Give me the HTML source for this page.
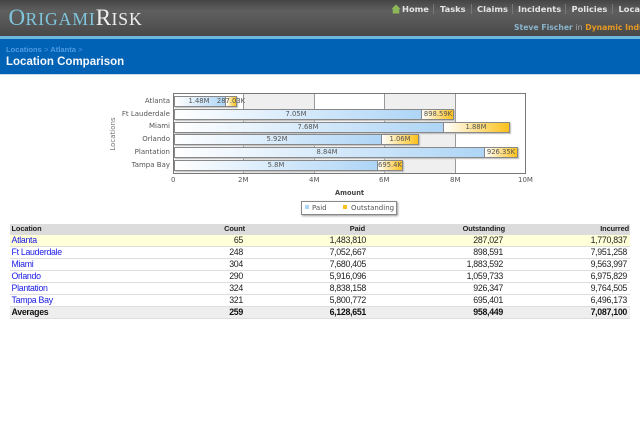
<!DOCTYPE html>
<html><head><meta charset="utf-8"><style>
*{box-sizing:border-box}
html,body{margin:0;padding:0;width:640px;height:430px;overflow:hidden;background:#fff}
body{position:relative;font-family:"Liberation Sans",sans-serif;filter:blur(.3px)}
.a{position:absolute;white-space:nowrap}
#hd{left:0;top:0;width:640px;height:36px;background:linear-gradient(#444 0,#5e5e5e 30%,#555 65%,#474747 100%)}
#ln{left:0;top:36px;width:640px;height:3px;background:#6db8dc}
#bl{left:0;top:39px;width:640px;height:35px;background:#0062b5}
#un{left:0;top:74px;width:640px;height:1px;background:#c5d8e6}
.nav{top:4px;font:bold 8.3px/11px "DejaVu Sans",sans-serif;color:#e4e4e4}
.sep{top:4px;width:1px;height:10px;background:#777}
.c{font:7px/8px "DejaVu Sans",sans-serif;color:#555}
.bar{position:absolute;height:11px;border:1.3px solid #888;box-shadow:1px 1px 1px #bbb}
.p{background:linear-gradient(90deg,#fff,#aed5f6)}
.o{background:linear-gradient(90deg,#fff,#fbc11c)}
.v{position:absolute;font:6.8px/11px "DejaVu Sans",sans-serif;color:#555;transform:translateX(-50%);white-space:nowrap}
.r{position:absolute;left:10px;width:620px;height:12px;font-size:8.8px;letter-spacing:-.3px;line-height:11px;border-bottom:1px solid #ddd;color:#222}
.r span{position:absolute;top:0}
.r .l{left:1.5px;color:#1a1ae6}
.r .n1{right:387px}.r .n2{right:264px}.r .n3{right:127px}.r .n4{right:3px}
.h .n1{right:385px}.h .n2{right:265px}.h .n3{right:125px}.h .n4{right:1px}
</style></head><body>
<div class="a" id="hd"></div><div class="a" id="ln"></div><div class="a" id="bl"></div><div class="a" id="un"></div>

<div class="a" style="left:8.5px;top:6px;font-family:'Liberation Serif',serif;font-size:23px;line-height:24px;letter-spacing:.4px;color:#7fc6dd"><span>O</span><span style="font-size:17.6px;letter-spacing:.95px">RIGAMI</span><span style="color:#eee">R</span><span style="font-size:17.6px;letter-spacing:.95px;color:#eee">ISK</span></div>

<svg class="a" style="left:391px;top:4px" width="10" height="10" viewBox="0 0 10 10"><path d="M5 .5L9.5 5H8.3V9.5H1.7V5H.5Z" fill="#8cb85a"/></svg>
<div class="a nav" style="left:402px">Home</div><div class="a sep" style="left:433px"></div>
<div class="a nav" style="left:440px">Tasks</div><div class="a sep" style="left:471px"></div>
<div class="a nav" style="left:477px">Claims</div><div class="a sep" style="left:512px"></div>
<div class="a nav" style="left:518px">Incidents</div><div class="a sep" style="left:565px"></div>
<div class="a nav" style="left:571.5px">Policies</div><div class="a sep" style="left:612px"></div>
<div class="a nav" style="left:618.5px">Locations</div>
<div class="a" style="left:514px;top:23px;font:bold 7.7px/10px 'DejaVu Sans',sans-serif;color:#8ab4cc">Steve Fischer <span style="font-weight:normal;color:#aaa">in</span> <span style="color:#e79a22">Dynamic Industries</span></div>

<div class="a" style="left:6px;top:45px;font-size:7.6px;line-height:10px;font-weight:bold;color:#4e9be2">Locations <span style="font-weight:normal">&gt;</span> Atlanta <span style="font-weight:normal">&gt;</span></div>
<div class="a" style="left:6px;top:55px;font-size:11.5px;line-height:15px;font-weight:bold;color:#f4f8fc">Location Comparison</div>

<!-- chart -->
<div class="a" style="left:173px;top:94px;width:352px;height:80px;background:#fff"></div>
<div class="a" style="left:243px;top:94px;width:71px;height:80px;background:#efefef"></div>
<div class="a" style="left:384px;top:94px;width:71px;height:80px;background:#efefef"></div>
<div class="a" style="left:243px;top:94px;width:1px;height:80px;background:#999"></div>
<div class="a" style="left:314px;top:94px;width:1px;height:80px;background:#999"></div>
<div class="a" style="left:384px;top:94px;width:1px;height:80px;background:#999"></div>
<div class="a" style="left:455px;top:94px;width:1px;height:80px;background:#999"></div>
<div class="bar p" style="left:174px;top:96px;width:52px"></div><div class="bar o" style="left:226px;top:96px;width:11px;border-left:0"></div>
<div class="bar p" style="left:174px;top:108.5px;width:248px"></div><div class="bar o" style="left:422px;top:108.5px;width:32px;border-left:0"></div>
<div class="bar p" style="left:174px;top:121.5px;width:270px"></div><div class="bar o" style="left:444px;top:121.5px;width:66px;border-left:0"></div>
<div class="bar p" style="left:174px;top:134px;width:208px"></div><div class="bar o" style="left:382px;top:134px;width:37px;border-left:0"></div>
<div class="bar p" style="left:174px;top:147px;width:311px"></div><div class="bar o" style="left:485px;top:147px;width:33px;border-left:0"></div>
<div class="bar p" style="left:174px;top:160px;width:204px"></div><div class="bar o" style="left:378px;top:160px;width:25px;border-left:0"></div>
<div class="a" style="left:173px;top:93px;width:353px;height:81px;border:1.5px solid #777"></div>

<div class="v" style="left:199px;top:96px">1.48M</div><div class="v" style="left:231px;top:96px">287.03K</div>
<div class="v" style="left:296px;top:109px">7.05M</div><div class="v" style="left:438px;top:109px">898.59K</div>
<div class="v" style="left:308px;top:122px">7.68M</div><div class="v" style="left:476px;top:122px">1.88M</div>
<div class="v" style="left:277px;top:134px">5.92M</div><div class="v" style="left:400px;top:134px">1.06M</div>
<div class="v" style="left:327px;top:147px">8.84M</div><div class="v" style="left:501px;top:147px">926.35K</div>
<div class="v" style="left:276px;top:160px">5.8M</div><div class="v" style="left:390px;top:160px">695.4K</div>

<div class="a c" style="right:470px;top:97px">Atlanta</div>
<div class="a c" style="right:470px;top:110px">Ft Lauderdale</div>
<div class="a c" style="right:470px;top:122px">Miami</div>
<div class="a c" style="right:470px;top:135px">Orlando</div>
<div class="a c" style="right:470px;top:148px">Plantation</div>
<div class="a c" style="right:470px;top:161px">Tampa Bay</div>
<div class="a c" style="left:93px;top:130px;width:40px;text-align:center;transform:rotate(-90deg);color:#777">Locations</div>

<div class="a c" style="left:171px;top:176px">0</div>
<div class="a c" style="left:238px;top:176px">2M</div>
<div class="a c" style="left:309px;top:176px">4M</div>
<div class="a c" style="left:379px;top:176px">6M</div>
<div class="a c" style="left:450px;top:176px">8M</div>
<div class="a c" style="left:518px;top:176px">10M</div>
<div class="a c" style="left:335px;top:189px;font-size:6.6px;font-weight:bold;color:#444">Amount</div>

<div class="a" style="left:301px;top:201px;width:96px;height:14px;background:#fff;border:1px solid #888;box-shadow:1px 1px 2px #999"></div>
<div class="a" style="left:305px;top:205px;width:4px;height:4px;background:#aed5f6"></div>
<div class="a c" style="left:312px;top:204px">Paid</div>
<div class="a" style="left:343px;top:205px;width:4px;height:4px;background:#fbc11c"></div>
<div class="a c" style="left:351px;top:204px">Outstanding</div>

<!-- table -->
<div class="r h" style="top:224px;height:11px;background:#dcdcdc;border:0;font-weight:bold;font-size:7.4px;letter-spacing:-.1px;line-height:10px"><span class="l" style="color:#222">Location</span><span class="n1">Count</span><span class="n2">Paid</span><span class="n3">Outstanding</span><span class="n4">Incurred</span></div>
<div class="r" style="top:235px;background:#ffffd8"><span class="l">Atlanta</span><span class="n1">65</span><span class="n2">1,483,810</span><span class="n3">287,027</span><span class="n4">1,770,837</span></div>
<div class="r" style="top:247px"><span class="l">Ft Lauderdale</span><span class="n1">248</span><span class="n2">7,052,667</span><span class="n3">898,591</span><span class="n4">7,951,258</span></div>
<div class="r" style="top:259px"><span class="l">Miami</span><span class="n1">304</span><span class="n2">7,680,405</span><span class="n3">1,883,592</span><span class="n4">9,563,997</span></div>
<div class="r" style="top:271px"><span class="l">Orlando</span><span class="n1">290</span><span class="n2">5,916,096</span><span class="n3">1,059,733</span><span class="n4">6,975,829</span></div>
<div class="r" style="top:283px"><span class="l">Plantation</span><span class="n1">324</span><span class="n2">8,838,158</span><span class="n3">926,347</span><span class="n4">9,764,505</span></div>
<div class="r" style="top:295px"><span class="l">Tampa Bay</span><span class="n1">321</span><span class="n2">5,800,772</span><span class="n3">695,401</span><span class="n4">6,496,173</span></div>
<div class="r" style="top:307px;background:#eee;font-weight:bold;color:#111"><span class="l" style="color:#111">Averages</span><span class="n1">259</span><span class="n2">6,128,651</span><span class="n3">958,449</span><span class="n4">7,087,100</span></div>
</body></html>
